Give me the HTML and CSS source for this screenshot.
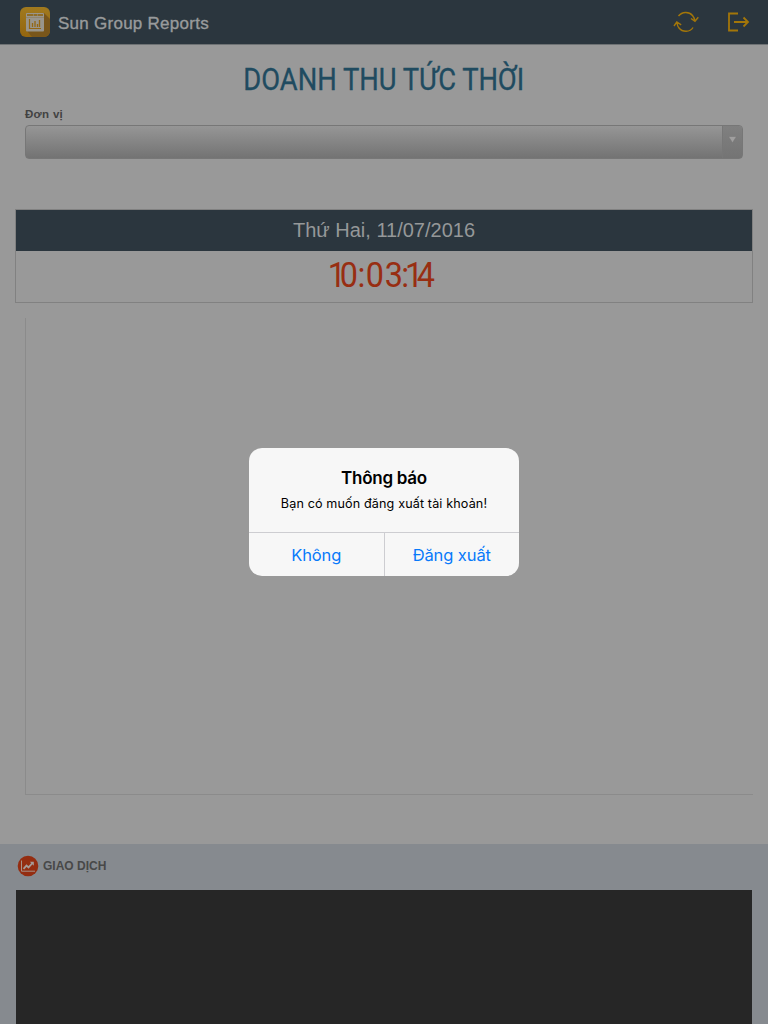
FILE: index.html
```html
<!DOCTYPE html>
<html lang="vi">
<head>
<meta charset="utf-8">
<title>Sun Group Reports</title>
<link rel="stylesheet" href="styles.css">
</head>
<body>
<div class="app">
  <header class="topbar">
    <svg class="logo" width="30" height="30" viewBox="0 0 30 30">
      <defs>
        <linearGradient id="gold" x1="0" y1="0" x2="0" y2="1"><stop offset="0" stop-color="#a17a1e"/><stop offset="1" stop-color="#93650f"/></linearGradient>
        <clipPath id="tile"><rect width="30" height="30" rx="6"/></clipPath>
      </defs>
      <g clip-path="url(#tile)">
        <rect width="30" height="30" fill="url(#gold)"/>
        <path d="M24 6l6 6v18H12l-5-6z" fill="#79561b"/>
        <rect x="6" y="6" width="18" height="18.500" rx="1" fill="#99958c"/>
        <path d="M7 8h16" stroke="#8f6d28" stroke-width="2.200" stroke-dasharray="6 .5 4 .5"/>
        <path d="M6 10.500h18" stroke="#8b7c5d" stroke-width=".6"/>
        <path d="M9.500 12v9.500H21" fill="none" stroke="#946713" stroke-width="1.200"/>
        <path d="M12.500 20v-4M15 20v-6M17.500 20v-3M19.500 20v-7" stroke="#946713" stroke-width="1.300"/>
      </g>
    </svg>
    <span class="brand">Sun Group Reports</span>
    <svg class="refresh" width="26" height="22" viewBox="0 0 26 22" fill="none" stroke="#a37609" stroke-width="1.400">
      <path d="M5.500 5C9 .5 16 .2 19.500 4.500Q21.500 7 21.800 9.500M18 7.500l4 2.800 3.300-4"/>
      <path d="M20 16.500C17 21.500 9.500 21.500 6 17Q4.300 15 4.100 12M1 15l2.800-4 4.400 2.800"/>
    </svg>
    <svg class="logout" width="22" height="20" viewBox="0 0 22 20" fill="none" stroke="#a37609" stroke-width="1.800">
      <path d="M11 1.500H2v17h9M7 10h14M16.500 5.500L21 10l-4.500 4.500"/>
    </svg>
  </header>

  <main class="content">
    <h1 class="title"><svg width="300" height="48"><text class="title-text" x="9.300" y="31.500" textLength="281" lengthAdjust="spacingAndGlyphs">DOANH THU TỨC THỜI</text></svg></h1>
    <div class="field">
      <label class="field-label">Đơn vị</label>
      <div class="select"><span class="select-arrow"><svg width="9" height="7" viewBox="0 0 9 7"><path d="M.5.500h8L4.500 6.800z" fill="#a09f9f" stroke="#747474" stroke-width=".5"/></svg></span></div>
    </div>
    <section class="date-card">
      <div class="date">Thứ Hai, 11/07/2016</div>
      <div class="clock"><svg width="130" height="44"><text class="clock-text" transform="translate(10 0) scale(.9 1)" x="-1.500 12 31.700 40.900 62 80.300 84.500 97.500" y="30">10:03:14</text></svg></div>
    </section>
    <section class="chart"></section>
  </main>

  <section class="trades">
    <div class="trades-head">
      <svg width="22" height="22" viewBox="0 0 22 22">
        <circle cx="11" cy="11" r="10.300" fill="#942d11"/>
        <path d="M4.500 5.500v10.700H18" fill="none" stroke="#a69189" stroke-width="1"/>
        <path d="M6.500 13.800l3-3.200 2 1.800L15.500 8" fill="none" stroke="#a69c98" stroke-width="1.800"/>
        <path d="M12.800 6.800h4v4z" fill="#a69c98"/>
      </svg>
      <span class="trades-title">GIAO DỊCH</span>
    </div>
    <div class="trades-panel"></div>
  </section>

  <div class="overlay">
    <div class="dialog" role="alertdialog">
      <div class="dialog-body">
        <div class="dialog-title">Thông báo</div>
        <div class="dialog-text">Bạn có muốn đăng xuất tài khoản!</div>
      </div>
      <div class="dialog-actions">
        <button class="action">Không</button>
        <button class="action action-last">Đăng xuất</button>
      </div>
    </div>
  </div>
</div>
</body>
</html>
```
FILE: styles.css
```css
* { box-sizing: border-box; }
body { margin: 0; background: #999; font-family: "Liberation Sans", Arial, sans-serif; }
.app { position: relative; display: flex; flex-direction: column; width: 768px; height: 1024px; overflow: hidden; }
svg { display: block; flex: none; overflow: visible; }

.topbar { display: flex; height: 45px; padding: 7px 20px 0; background: #2b363e; border-bottom: 1px solid #6e7274; }
.brand { flex: 1; margin-left: 8px; padding-top: 7px; font-size: 17px; line-height: 20px; letter-spacing: .26px; color: #999b9c; -webkit-text-stroke: .35px #999b9c; }
.refresh { margin: 4px 28px 0 0; }
.logout { margin: 5px -1px 0 0; }

.content { height: 799px; padding: 13px 15px 0; }
.title { display: flex; justify-content: center; margin: 0; height: 48px; }
.title-text { font: 400 32px Roboto, sans-serif; fill: #204b60; stroke: #204b60; stroke-width: .3px; }
.field { height: 103px; padding: 0 10px; }
.field-label { display: block; height: 19px; font-size: 11.5px; line-height: 16px; font-weight: 700; letter-spacing: .3px; color: #424242; }
.select { display: flex; justify-content: flex-end; height: 34px; border: 1px solid #777; border-radius: 4px; background: linear-gradient(#969696, #737373); overflow: hidden; }
.select-arrow { display: flex; align-items: flex-start; justify-content: center; width: 20px; padding: 10px 1px 0 0; border-left: 1px solid #777; background: linear-gradient(#808080, #747474); }

.date-card { height: 94px; border: 1px solid #818181; }
.date { height: 41px; background: #2b363e; color: #959899; font-size: 20px; line-height: 41px; text-align: center; }
.clock { display: flex; justify-content: center; height: 50px; padding-top: 6px; }
.clock-text { font: 400 36px Roboto, sans-serif; fill: #982e12; }
.chart { height: 477px; margin: 15px 0 0 10px; border-left: 1px solid #8b8b8b; border-bottom: 1px solid #8b8b8b; }

.trades { display: flex; flex-direction: column; flex: 1; padding: 0 16px; background: #868a8f; }
.trades-head { display: flex; align-items: center; gap: 4px; height: 46px; padding: 0 1px 2px; }
.trades-title { font-size: 12px; line-height: 14px; font-weight: 700; letter-spacing: 0; color: #484848; }
.trades-panel { flex: 1; background: #262626; }

.overlay { position: absolute; inset: 0; display: flex; align-items: center; justify-content: center; }
.dialog { display: flex; flex-direction: column; width: 270px; height: 128px; border-radius: 13px; background: #f7f7f7; overflow: hidden; font-family: Inter, sans-serif; text-align: center; }
.dialog-body { flex: 1; padding-top: 20px; }
.dialog-title { font-size: 17px; line-height: 21px; font-weight: 600; letter-spacing: -.25px; color: #000; }
.dialog-text { padding-top: 6px; font-size: 12.6px; line-height: 18px; letter-spacing: .13px; color: #000; }
.dialog-actions { display: flex; height: 44px; border-top: 1px solid #cdcdd1; }
.action { flex: 1; padding: 1px 0 0; border: 0; background: none; font: 400 16.5px/43px Inter, sans-serif; letter-spacing: -.1px; color: #087afa; }
.action-last { border-left: 1px solid #cdcdd1; }
```
